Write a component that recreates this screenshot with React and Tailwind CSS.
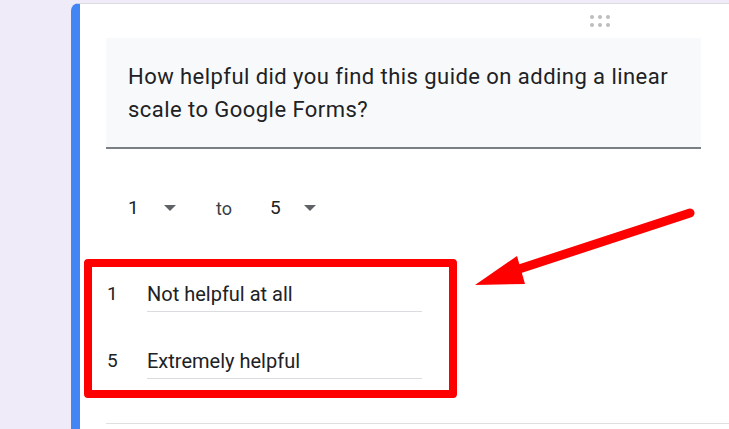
export default function App() {
  const font = { fontFamily: 'Roboto, "Noto Sans", Arial, sans-serif' };
  return (
    <div className="relative h-[429px] w-[729px] overflow-hidden bg-[#f0ebf8]" style={font}>
      <div className="ml-[71px] mt-[3px] h-[440px] w-[680px] rounded-tl-[8px] border-t border-l-[9px] border-t-[#dadce0] border-l-[#4285f4] bg-white">
        {/* drag handle */}
        <div className="flex h-[34px] w-[600px] items-center justify-center pl-[440px]">
          <div className="grid grid-cols-3 gap-x-[4px] gap-y-[4px]">
            {[0, 1, 2, 3, 4, 5].map((i) => (
              <span key={i} className="h-[4px] w-[4px] rounded-full bg-[#bdbdbd]" />
            ))}
          </div>
        </div>

        <div className="ml-[26px] w-[595px] border-b-2 border-[#7b7e82] bg-[#f8f9fa] pl-[22px] pr-[12px] pt-[22px] pb-[21px] text-[22px] leading-[33px] tracking-[0.45px] text-[#202124]">
          How helpful did you find this guide on adding a linear scale to Google Forms?
        </div>

        <div className="ml-[48px] mt-[35px] flex h-[48px] items-center text-[#202124]">
          <span className="w-[10px] text-[19px]">1</span>
          <svg className="ml-[26px]" width="12" height="6" viewBox="0 0 12 6">
            <path d="M0 0h12L6 6z" fill="#5f6368" />
          </svg>
          <span className="ml-[40px] text-[18px] text-[#3c4043]">to</span>
          <span className="ml-[38px] w-[10px] text-[19px]">5</span>
          <svg className="ml-[24px]" width="12" height="6" viewBox="0 0 12 6">
            <path d="M0 0h12L6 6z" fill="#5f6368" />
          </svg>
        </div>

        <div className="ml-[27px] mt-[44px] flex flex-col gap-[31px]">
          {[
            ['1', 'Not helpful at all'],
            ['5', 'Extremely helpful'],
          ].map(([n, label]) => (
            <div key={n} className="flex items-start">
              <span className="w-[40px] pt-[4px] text-[19px] leading-[28px] text-[#202124]">{n}</span>
              <div className="w-[275px] border-b border-[#dadce0] pb-[3px] pt-[4px] text-[20px] leading-[28px] text-[#202124]">
                {label}
              </div>
            </div>
          ))}
        </div>

        <div className="ml-[26px] mt-[44px] h-px bg-[#e0e0e0]" />
      </div>

      {/* annotation box */}
      <div className="absolute left-[84px] top-[259px] h-[139px] w-[373px] rounded-[4px] border-[8px] border-[#ff0000]" />

      {/* annotation arrow */}
      <svg className="absolute left-0 top-0" width="729" height="429" viewBox="0 0 729 429">
        <line x1="690" y1="213" x2="510" y2="272" stroke="#ff0000" strokeWidth="9" strokeLinecap="round" />
        <path d="M475 285 L517 256 L525 284 Z" fill="#ff0000" />
      </svg>
    </div>
  );
}
